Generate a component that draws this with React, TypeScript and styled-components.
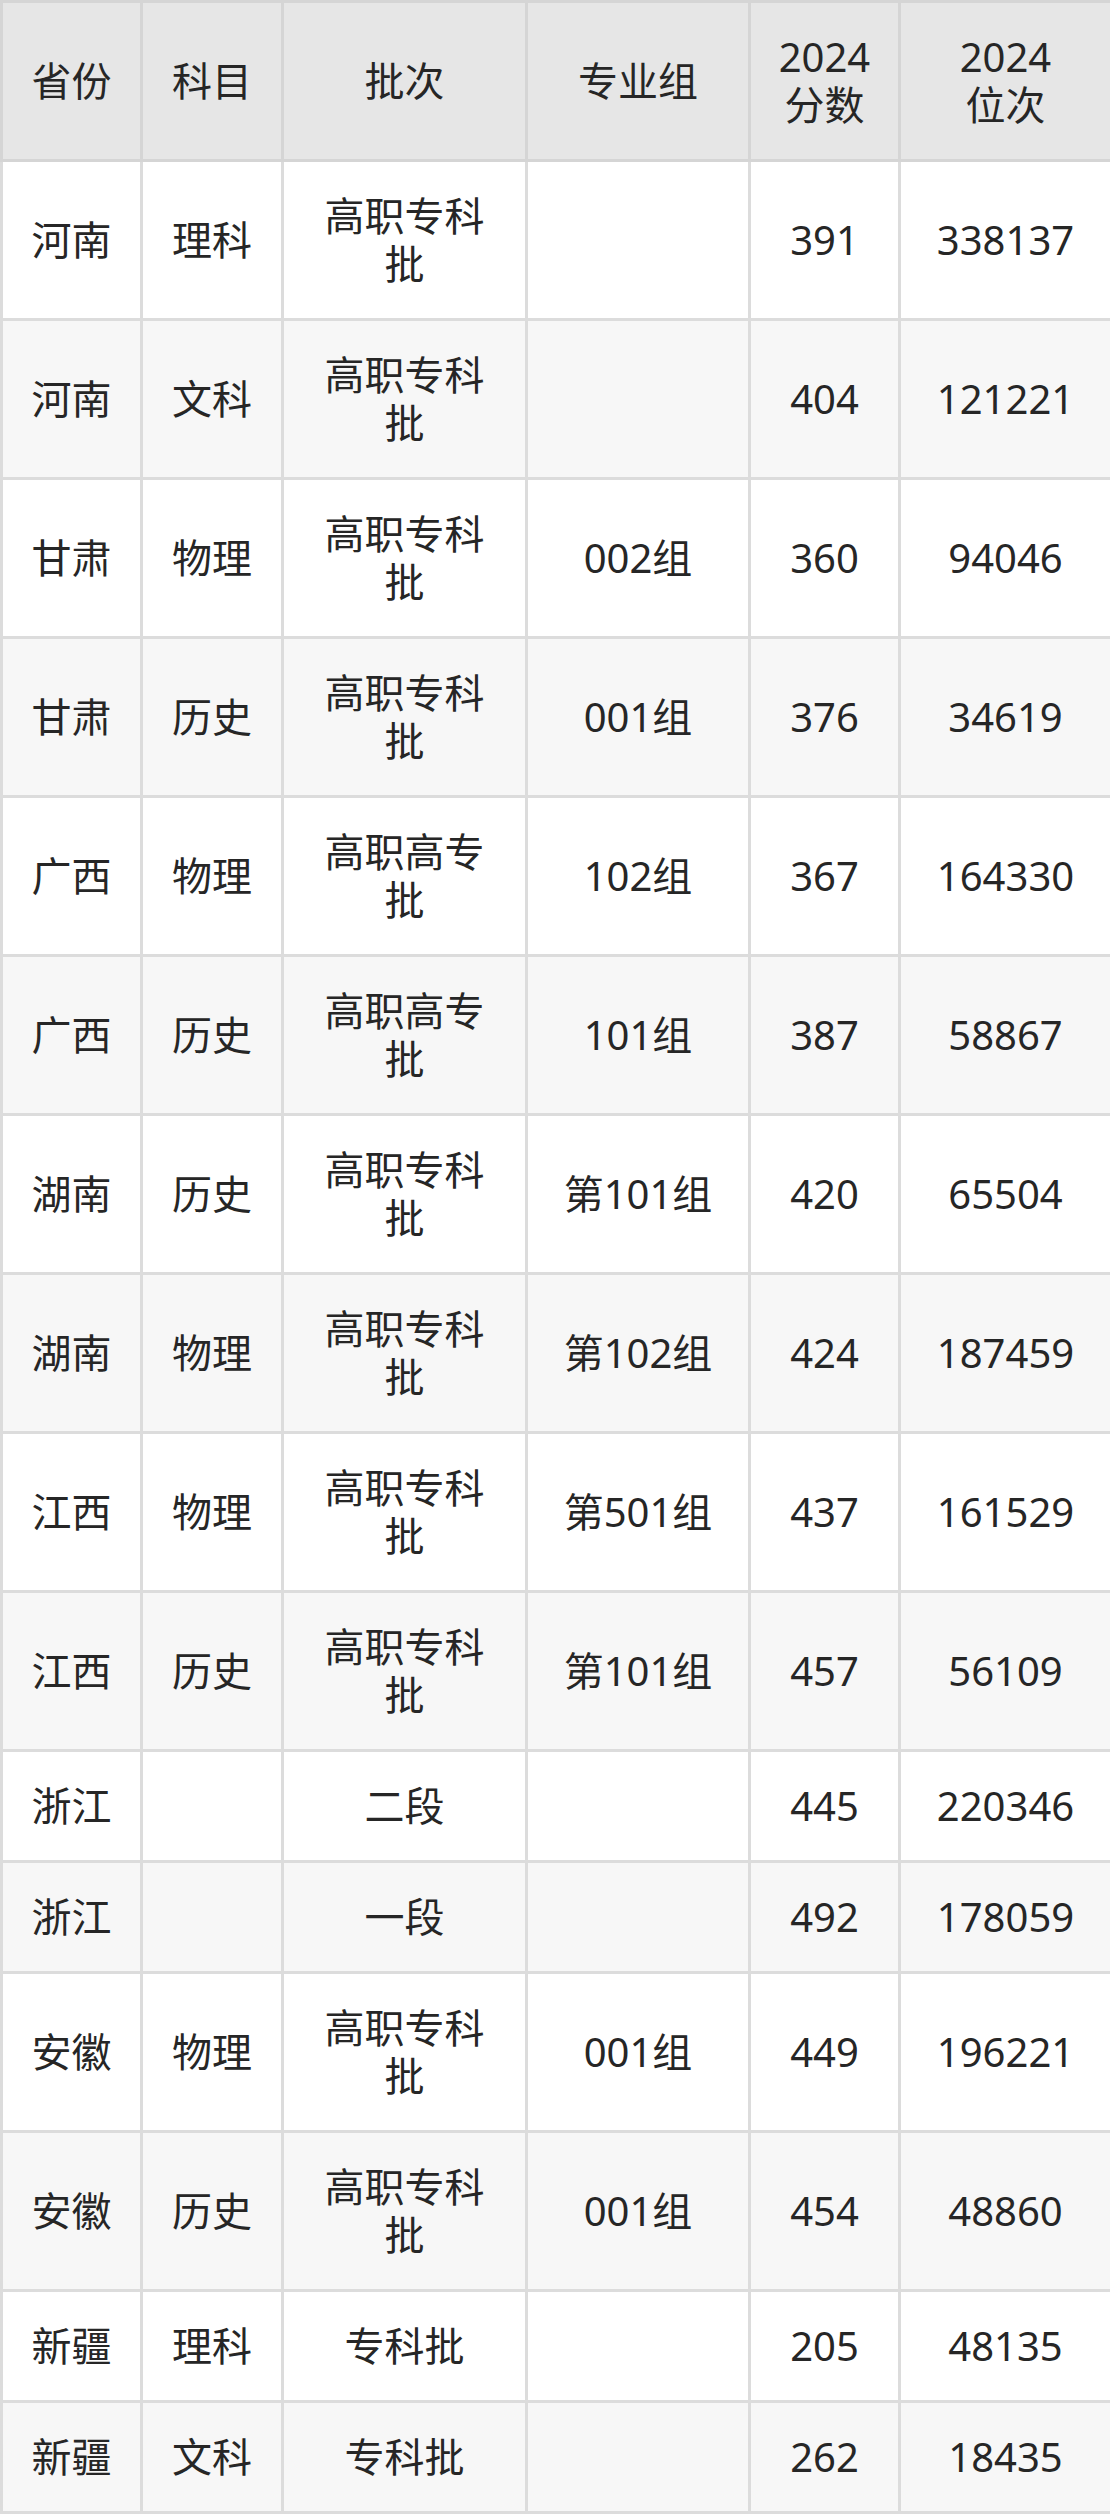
import React from 'react';
import styled, { createGlobalStyle } from 'styled-components';

const GlobalStyle = createGlobalStyle`
  html, body {
    margin: 0;
    padding: 0;
    background: #ffffff;
  }
  body {
    font-family: "Noto Sans", "Noto Sans CJK SC", sans-serif;
    color: #262626;
  }
`;

interface Row {
  province: string;
  subject: string;
  batch: string;
  group: string;
  score: string;
  rank: string;
}

const ROWS: Row[] = [
  { province: '河南', subject: '理科', batch: '高职专科批', group: '', score: '391', rank: '338137' },
  { province: '河南', subject: '文科', batch: '高职专科批', group: '', score: '404', rank: '121221' },
  { province: '甘肃', subject: '物理', batch: '高职专科批', group: '002组', score: '360', rank: '94046' },
  { province: '甘肃', subject: '历史', batch: '高职专科批', group: '001组', score: '376', rank: '34619' },
  { province: '广西', subject: '物理', batch: '高职高专批', group: '102组', score: '367', rank: '164330' },
  { province: '广西', subject: '历史', batch: '高职高专批', group: '101组', score: '387', rank: '58867' },
  { province: '湖南', subject: '历史', batch: '高职专科批', group: '第101组', score: '420', rank: '65504' },
  { province: '湖南', subject: '物理', batch: '高职专科批', group: '第102组', score: '424', rank: '187459' },
  { province: '江西', subject: '物理', batch: '高职专科批', group: '第501组', score: '437', rank: '161529' },
  { province: '江西', subject: '历史', batch: '高职专科批', group: '第101组', score: '457', rank: '56109' },
  { province: '浙江', subject: '', batch: '二段', group: '', score: '445', rank: '220346' },
  { province: '浙江', subject: '', batch: '一段', group: '', score: '492', rank: '178059' },
  { province: '安徽', subject: '物理', batch: '高职专科批', group: '001组', score: '449', rank: '196221' },
  { province: '安徽', subject: '历史', batch: '高职专科批', group: '001组', score: '454', rank: '48860' },
  { province: '新疆', subject: '理科', batch: '专科批', group: '', score: '205', rank: '48135' },
  { province: '新疆', subject: '文科', batch: '专科批', group: '', score: '262', rank: '18435' },
];

const COLUMN_WIDTHS = [140, 141, 244, 223, 150, 212];

const Table = styled.table`
  width: 1110px;
  border-collapse: collapse;
  table-layout: fixed;
  font-size: 40px;
  line-height: 48px;
`;

const HeadCell = styled.th`
  background: #e6e6e6;
  border: 3px solid #d5d5d5;
  padding: 30px 24px;
  font-weight: 400;
  text-align: center;
  vertical-align: middle;
  color: #262626;
`;

const HeadLine = styled.span`
  display: block;
  height: 48px;
  line-height: 48px;
`;

const BodyRow = styled.tr<{ $striped: boolean }>`
  background: ${(props) => (props.$striped ? '#f7f7f7' : '#ffffff')};
`;

const Cell = styled.td`
  border: 3px solid #dcdcdc;
  padding: 30px 24px;
  text-align: center;
  vertical-align: middle;
  color: #262626;
`;

const App: React.FC = () => {
  return (
    <>
      <GlobalStyle />
      <Table>
        <colgroup>
          {COLUMN_WIDTHS.map((w, i) => (
            <col key={i} style={{ width: w }} />
          ))}
        </colgroup>
        <thead>
          <tr>
            <HeadCell>省份</HeadCell>
            <HeadCell>科目</HeadCell>
            <HeadCell>批次</HeadCell>
            <HeadCell>专业组</HeadCell>
            <HeadCell>
              <HeadLine>2024</HeadLine>
              <HeadLine>分数</HeadLine>
            </HeadCell>
            <HeadCell>
              <HeadLine>2024</HeadLine>
              <HeadLine>位次</HeadLine>
            </HeadCell>
          </tr>
        </thead>
        <tbody>
          {ROWS.map((row, i) => (
            <BodyRow key={i} $striped={i % 2 === 1}>
              <Cell>{row.province}</Cell>
              <Cell>{row.subject}</Cell>
              <Cell>{row.batch}</Cell>
              <Cell>{row.group}</Cell>
              <Cell>{row.score}</Cell>
              <Cell>{row.rank}</Cell>
            </BodyRow>
          ))}
        </tbody>
      </Table>
    </>
  );
};

export default App;
